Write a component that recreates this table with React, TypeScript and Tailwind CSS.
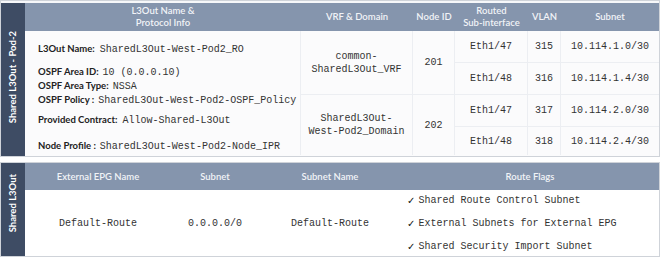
import React from 'react';

const mono = "font-['Liberation_Mono','Courier_New',monospace] text-[10px] leading-[13px] text-[#333] whitespace-nowrap";
const label = "font-['Lato','Liberation_Sans',sans-serif] font-bold text-[9.5px] leading-[13px] text-[#222] whitespace-nowrap";
const head = "font-['Lato','Liberation_Sans',sans-serif] font-semibold text-[9.5px] text-[#f1f3f7] leading-[12px] text-center whitespace-nowrap";

const ports = [
  { eth: 'Eth1/47', vlan: '315', subnet: '10.114.1.0/30' },
  { eth: 'Eth1/48', vlan: '316', subnet: '10.114.1.4/30' },
  { eth: 'Eth1/47', vlan: '317', subnet: '10.114.2.0/30' },
  { eth: 'Eth1/48', vlan: '318', subnet: '10.114.2.4/30' },
];

const flags = ['Shared Route Control Subnet', 'External Subnets for External EPG', 'Shared Security Import Subnet'];

const SideBar = ({ text, lift }: { text: string; lift?: boolean }) => (
  <div className="w-[24px] bg-[#3e4c64] flex items-center justify-center">
    <span
      className={`-rotate-90 whitespace-nowrap font-['Lato','Liberation_Sans',sans-serif] font-bold text-[9.5px] text-white ${lift ? 'mb-[12px]' : 'mb-[4px]'}`}
    >
      {text}
    </span>
  </div>
);

const App = () => {
  return (
    <div className="w-[662px] h-[259px] bg-white flex flex-col">
      {/* top panel */}
      <div className="flex w-[660px] h-[157px] border border-[#cfd3d9] bg-[#f7f8fa] pt-[2px]">
        <SideBar text="Shared L3Out - Pod-2" />
        <div className="grid grid-cols-[276px_112px_42px_73px_33px_98px] grid-rows-[28px_32px_32px_32px_28px] bg-[#fbfbfc]">
          <div className={`${head} bg-[#8595ad] flex items-center justify-center`}>L3Out Name &<br />Protocol Info</div>
          <div className={`${head} bg-[#8595ad] flex items-center justify-center`}>VRF & Domain</div>
          <div className={`${head} bg-[#8595ad] flex items-center justify-center`}>Node ID</div>
          <div className={`${head} bg-[#8595ad] flex items-center justify-center`}>Routed<br />Sub-interface</div>
          <div className={`${head} bg-[#8595ad] flex items-center justify-center`}>VLAN</div>
          <div className={`${head} bg-[#8595ad] flex items-center justify-center`}>Subnet</div>

          <div className="row-span-4 col-start-1 row-start-2 border-r border-[#eceef2] pl-[13px] flex flex-col">
            <div className="mt-[11px] flex items-baseline gap-[5px]">
              <span className={label}>L3Out Name:</span>
              <span className={mono}>SharedL3Out-West-Pod2_RO</span>
            </div>
            <div className="mt-[9px] flex flex-col">
              <div className="flex items-baseline gap-[4px]">
                <span className={label}>OSPF Area ID:</span>
                <span className={mono}>10 (0.0.0.10)</span>
              </div>
              <div className="flex items-baseline gap-[4px]">
                <span className={label}>OSPF Area Type:</span>
                <span className={mono}>NSSA</span>
              </div>
              <div className="flex items-baseline gap-[4px]">
                <span className={label}>OSPF Policy :</span>
                <span className={mono}>SharedL3Out-West-Pod2-OSPF_Policy</span>
              </div>
            </div>
            <div className="mt-[6px] flex items-baseline gap-[5px]">
              <span className={label}>Provided Contract:</span>
              <span className={mono}>Allow-Shared-L3Out</span>
            </div>
            <div className="mt-[12px] flex items-baseline gap-[4px]">
              <span className={label}>Node Profile :</span>
              <span className={mono}>SharedL3Out-West-Pod2-Node_IPR</span>
            </div>
          </div>

          <div className={`${mono} col-start-2 row-start-2 row-span-2 border-r border-b border-[#eceef2] flex items-center justify-center text-center`}>
            common-<br />SharedL3Out_VRF
          </div>
          <div className={`${mono} col-start-2 row-start-4 row-span-2 border-r border-[#eceef2] flex items-center justify-center text-center`}>
            SharedL3Out-<br />West-Pod2_Domain
          </div>
          <div className={`${mono} col-start-3 row-start-2 row-span-2 border-r border-b border-[#eceef2] flex items-center justify-center`}>201</div>
          <div className={`${mono} col-start-3 row-start-4 row-span-2 border-r border-[#eceef2] flex items-center justify-center`}>202</div>

          {ports.map((p, i) => (
            <React.Fragment key={i}>
              <div className={`${mono} col-start-4 border-r border-[#eceef2] ${i < 3 ? 'border-b' : ''} flex items-center justify-center`}>{p.eth}</div>
              <div className={`${mono} col-start-5 border-r border-[#eceef2] ${i < 3 ? 'border-b' : ''} flex items-center justify-center`}>{p.vlan}</div>
              <div className={`${mono} col-start-6 border-[#eceef2] ${i < 3 ? 'border-b' : ''} flex items-center justify-center`}>{p.subnet}</div>
            </React.Fragment>
          ))}
        </div>
      </div>

      {/* bottom panel */}
      <div className="flex w-[660px] h-[95px] mt-[5px] border border-[#cfd3d9] bg-white">
        <SideBar text="Shared L3Out" lift />
        <div className="flex flex-col w-[634px]">
          <div className="h-[27px] bg-[#8595ad] grid grid-cols-[146px_88px_142px_258px] items-center">
            <div className={head}>External EPG Name</div>
            <div className={head}>Subnet</div>
            <div className={head}>Subnet Name</div>
            <div className={head}>Route Flags</div>
          </div>
          <div className="flex-1 grid grid-cols-[146px_88px_142px_258px] items-center">
            <div className={`${mono} text-center`}>Default-Route</div>
            <div className={`${mono} text-center`}>0.0.0.0/0</div>
            <div className={`${mono} text-center`}>Default-Route</div>
            <div className="flex flex-col gap-[10px] pl-[6px]">
              {flags.map((f) => (
                <div key={f} className={`${mono} flex gap-[3px]`}>
                  <span className="font-['DejaVu_Sans',sans-serif] text-[10px] text-[#111]">✓</span>
                  <span>{f}</span>
                </div>
              ))}
            </div>
          </div>
        </div>
      </div>
    </div>
  );
};

export default App;
